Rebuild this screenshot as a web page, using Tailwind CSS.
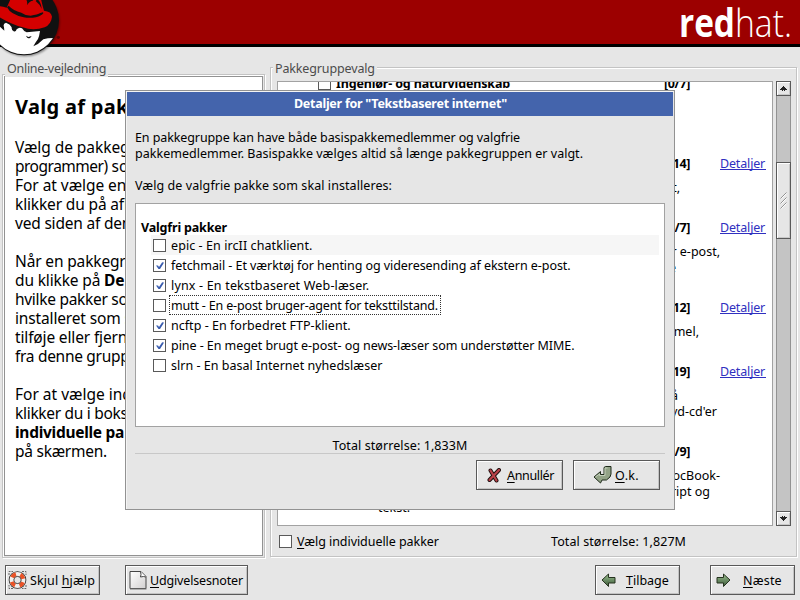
<!DOCTYPE html>
<html lang="da">
<head>
<meta charset="utf-8">
<title>Pakkegruppevalg</title>
<script src="https://cdn.jsdelivr.net/npm/@tailwindcss/browser@4"></script>
</head>
<body class="w-[800px] h-[600px] overflow-hidden bg-[#e6e6e6] text-black text-[12.5px] leading-4 font-['Noto_Sans','Open_Sans',sans-serif] whitespace-nowrap">
<div class="relative w-[800px] h-[600px] flex flex-col">

  <!-- Banner -->
  <header class="h-[47px] shrink-0 bg-[#9c0000] border-b-[3px] border-black flex justify-between">
    <svg class="relative z-10 shrink-0" width="64" height="60" viewBox="0 0 192 180">
      <defs>
        <clipPath id="disc"><circle cx="72" cy="61" r="102"/></clipPath>
        <filter id="soft"><feGaussianBlur stdDeviation="3"/></filter>
      </defs>
      <circle cx="75" cy="65" r="104" fill="#000" opacity=".45" filter="url(#soft)"/>
      <circle cx="72" cy="61" r="105" fill="#111"/>
      <g clip-path="url(#disc)">
        <path fill="#fff" d="M-40 75L0 80L13 92L12 82Q8 70 18 68Q30 72 35 82Q34 90 41 94Q47 97 50 88Q58 80 66 85Q72 95 80 97L120 93Q118 108 114 117Q106 128 100 139Q116 133 130 118Q142 114 160 114L160 180L-40 180Z"/>
        <path fill="#111" d="M78 107L85 111L95 108L91 113Q84 117 80 111Z"/>
        <path fill="#d40000" d="M-10 20Q2 16 20 23L34 -8L122 -8Q126 12 132 32Q154 34 156 50Q154 72 134 82Q100 94 68 82Q30 72 -10 46Z"/>
        <path fill="#111" d="M21 22L26 17Q40 32 64 38Q76 47 92 47Q113 44 121 39L129 37L130 40Q124 48 108 52Q88 55 71 52Q32 44 21 22Z"/>
        <path fill="#111" d="M78 -2Q83 4 81 16Q88 2 100 2L92 -4ZM112 -3Q124 8 125 27Q119 12 107 3Z"/>
      </g>
      <circle cx="175" cy="112" r="5" fill="#5c0000"/>
    </svg>
    <svg class="shrink-0 overflow-visible" width="128" height="44" viewBox="0 0 128 44" fill="#fff" font-family="Open Sans">
      <text x="7" y="37" font-size="39" font-weight="700" textLength="56" lengthAdjust="spacingAndGlyphs">red</text>
      <text x="63" y="37" font-size="39" font-weight="300" textLength="57" lengthAdjust="spacingAndGlyphs">hat.</text>
    </svg>
  </header>

  <main class="h-[511px] shrink-0 flex">
    <!-- Help pane -->
    <section class="w-[270px] pl-[2px] pt-[27px]">
      <div class="relative w-[263px] h-[484px] border border-[#c3c3c3] shadow-[inset_1px_1px_#fff,1px_1px_#fff] p-px">
        <h2 class="absolute left-[2px] -top-[14px] px-[2px] bg-[#e6e6e6] text-[#4c4c4c] tracking-[-0.27px]">Online-vejledning</h2>
        <div class="h-full bg-white border border-[#929292] pl-[10px] pt-[20px] text-[15.5px] leading-[19px] overflow-hidden">
          <h1 class="text-[20px] leading-[20px] font-bold tracking-[0.3px] mb-[21px]">Valg af pak</h1>
          <p class="mb-[19px] tracking-[-0.05px]">Vælg de pakkeg<br><span class="tracking-[-0.5px]">programmer)</span> so<br>For at vælge en<br><span class="tracking-[-0.15px]">klikker du på afk</span><br><span class="tracking-[-0.2px]">ved siden af den</span></p>
          <p class="mb-[19px] tracking-[-0.15px]">Når en pakkegr<br>du klikke på <b>De</b><br><span class="tracking-[-0.3px]">hvilke pakker so</span><br>installeret som s<br>tilføje eller fjern<br><span class="tracking-[-0.3px]">fra denne grupp</span></p>
          <p>For at vælge ind<br><span class="tracking-[-0.3px]">klikker du i boks</span><br><b class="tracking-[-0.29px]">individuelle pa</b><br><span class="tracking-[-0.25px]">på skærmen.</span></p>
        </div>
      </div>
    </section>

    <!-- Package groups -->
    <section class="pt-[20px]">
      <div class="relative w-[527px] h-[490px] border border-[#c3c3c3] shadow-[inset_1px_1px_#fff,1px_1px_#fff] pl-[6px] pt-[13px]">
        <h2 class="absolute left-[2px] -top-[7px] px-[2px] bg-[#e6e6e6] text-[#4c4c4c] tracking-[-0.14px]">Pakkegruppevalg</h2>
        <div class="flex gap-[3px]">
          <div class="w-[496px] h-[445px] bg-white border border-[#a2a2a2] overflow-hidden">
            <div class="-mt-[6px]">
              <div class="h-[80px] flex pl-[40px]">
                <span class="size-[13px] mt-px border border-[#595959]"></span>
                <b class="w-[275px] pl-[5px] tracking-[-0.16px]">Ingeniør- og naturvidenskab</b>
                <b class="w-[84px] text-right tracking-[-0.36px]">[0/7]</b>
              </div>
              <div class="h-[64px]">
                <div class="flex mb-2"><b class="w-[412px] text-right tracking-[-0.36px]">14]</b><a class="ml-[30px] w-[46px] h-[14px] border-b border-[#3030c0] text-[#3030c0] tracking-[-0.16px]">Detaljer</a></div>
                <p class="w-[402px] text-right">t,</p>
              </div>
              <div class="h-[80px]">
                <div class="flex mb-2"><b class="w-[412px] text-right tracking-[-0.36px]">/7]</b><a class="ml-[30px] w-[46px] h-[14px] border-b border-[#3030c0] text-[#3030c0] tracking-[-0.16px]">Detaljer</a></div>
                <p class="w-[442px] text-right">r e-post,</p>
                <p class="w-[398px] text-right">e</p>
              </div>
              <div class="h-[64px]">
                <div class="flex mb-2"><b class="w-[412px] text-right tracking-[-0.36px]">12]</b><a class="ml-[30px] w-[46px] h-[14px] border-b border-[#3030c0] text-[#3030c0] tracking-[-0.16px]">Detaljer</a></div>
                <p class="w-[421px] text-right">mel,</p>
              </div>
              <div class="h-[80px]">
                <div class="flex mb-2"><b class="w-[412px] text-right tracking-[-0.36px]">19]</b><a class="ml-[30px] w-[46px] h-[14px] border-b border-[#3030c0] text-[#3030c0] tracking-[-0.16px]">Detaljer</a></div>
                <p class="w-[400px] text-right">å</p>
                <p class="w-[439px] text-right">yd-cd'er</p>
              </div>
              <div class="h-[80px]">
                <div class="mb-2"><b class="block w-[412px] text-right tracking-[-0.36px]">/9]</b></div>
                <p class="w-[442px] text-right">ocBook-</p>
                <p class="w-[432px] text-right">ript og</p>
                <p class="pl-[100px]">tekst.</p>
              </div>
            </div>
          </div>
          <!-- Scrollbar -->
          <div class="relative w-[15px] h-[445px] bg-[#c4c4c4] border border-[#929292] flex flex-col">
            <span class="-mx-px -mt-px w-[15px] h-[15px] bg-[#e6e6e6] border border-[#595959] shadow-[inset_1px_1px_#fff,inset_-1px_-1px_#c8c8c8] flex items-center justify-center">
              <svg width="7" height="5" shape-rendering="crispEdges"><path d="M3 0h1v1h1v1h1v1h1v1h-2v1h-1v-1h-1v1h-1v-1h-2v-1h1v-1h1v-1h1z" fill="#222"/></svg>
            </span>
            <span class="-mx-px mt-[66px] w-[15px] h-[77px] bg-[#e6e6e6] border border-[#595959] shadow-[inset_1px_1px_#fff,inset_-1px_-1px_#c8c8c8] flex items-center justify-center">
              <svg width="7" height="17" fill="none"><path d="M.5 6.500l6-6M.5 11.500l6-6M.5 16.500l6-6" stroke="#929292"/><path d="M1.500 6.500l5-5M1.500 11.500l5-5M1.500 16.500l5-5" stroke="#fff"/></svg>
            </span>
            <span class="-mx-px -mb-px mt-auto w-[15px] h-[15px] bg-[#e6e6e6] border border-[#595959] shadow-[inset_1px_1px_#fff,inset_-1px_-1px_#c8c8c8] flex items-center justify-center">
              <svg width="7" height="5" shape-rendering="crispEdges"><path d="M0 1h2v-1h1v1h1v-1h1v1h2v1h-1v1h-1v1h-1v1h-1v-1h-1v-1h-1v-1h-1z" fill="#222"/></svg>
            </span>
          </div>
        </div>
        <div class="flex mt-[8px] pl-[2px]">
          <span class="size-[13px] mt-px bg-white border border-[#595959]"></span>
          <span class="ml-[5px] w-[254px] tracking-[-0.05px]"><u class="underline-offset-2">V</u>ælg individuelle pakker</span>
          <span class="tracking-[0.09px]">Total størrelse: 1,827M</span>
        </div>
      </div>
    </section>
  </main>

  <!-- Navigation buttons -->
  <footer class="flex pl-[5px] pt-[7px]">
    <button class="w-[95px] h-[30px] border border-[#595959] shadow-[inset_1px_1px_#fff,inset_-1px_-1px_#c3c3c3] flex items-center pl-[2px] tracking-[0.12px]">
      <svg class="mr-[3px]" width="19" height="20" viewBox="0 0 19 20" fill="none"><path d="M1 5V1.500H5M14 1.500h4V5M18 15v3.500h-4M5 18.500H1V15" stroke="#666" stroke-dasharray="2 1"/><circle cx="9.500" cy="10" r="8.800" fill="#2b2b2b"/><circle cx="9.500" cy="10" r="5.900" stroke="#f2efec" stroke-width="4.200"/><circle cx="9.500" cy="10" r="5.900" stroke="#ea5226" stroke-width="4.200" stroke-dasharray="4.800 4.467" transform="rotate(22 9.500 10)"/><circle cx="9.500" cy="10" r="3.600" fill="#e6e6e6" stroke="#444" stroke-width=".8"/></svg>
      <span class="pt-[2px]">Skjul <u class="underline-offset-2">h</u>jælp</span>
    </button>
    <button class="ml-[25px] w-[123px] h-[30px] border border-[#595959] shadow-[inset_1px_1px_#fff,inset_-1px_-1px_#c3c3c3] flex items-center pl-[3px] tracking-[-0.16px]">
      <svg class="mr-[3px]" width="18" height="20" viewBox="0 0 18 20"><defs><linearGradient id="page" x1="0" y1="0" x2="1" y2="1"><stop stop-color="#fff"/><stop offset="1" stop-color="#d2d0d0"/></linearGradient></defs><path d="M1 1.500h11l5 5v12h-16z" fill="url(#page)" stroke="#444"/><path d="M11.500 1.500q1 3 0 5.500q3-1 5.500 0" fill="#fff" stroke="#444"/><path d="M1 19h16.500" stroke="#777"/></svg>
      <span class="pt-[2px]"><u class="underline-offset-2">U</u>dgivelsesnoter</span>
    </button>
    <button class="ml-[347px] w-[85px] h-[30px] border border-[#595959] shadow-[inset_1px_1px_#fff,inset_-1px_-1px_#c3c3c3] flex items-center pl-[5px]">
      <svg class="mr-[10px]" width="15" height="15" viewBox="0 0 15 15"><defs><linearGradient id="green" x1="0" y1="0" x2="0" y2="1"><stop stop-color="#9ac090"/><stop offset="1" stop-color="#3b5838"/></linearGradient></defs><path d="M1 7L7.500 1v3.500H14v5.500H7.500v3.500z" fill="url(#green)" stroke="#26331f"/></svg>
      <span class="pt-[2px]"><u class="underline-offset-2">T</u>ilbage</span>
    </button>
    <button class="ml-[30px] w-[85px] h-[30px] border border-[#595959] shadow-[inset_1px_1px_#fff,inset_-1px_-1px_#c3c3c3] flex items-center pl-[5px] tracking-[0.2px]">
      <svg class="mr-[12px]" width="15" height="15" viewBox="0 0 15 15"><path d="M14 7L7.500 1v3.500H1v5.500h6.500v3.500z" fill="url(#green)" stroke="#26331f"/></svg>
      <span class="pt-[2px]"><u class="underline-offset-2">N</u>æste</span>
    </button>
  </footer>

  <!-- Details dialog -->
  <div class="absolute z-20 left-[125px] top-[90px] w-[550px] h-[420px] bg-[#e6e6e6] border border-[#929292] shadow-[inset_1px_1px_#f4f4f4] pt-px px-px flex flex-col">
    <h2 class="h-[24px] bg-[#4464ac] text-white font-bold text-center pt-[4px] pl-px tracking-[-0.26px]">Detaljer for "Tekstbaseret internet"</h2>
    <div class="px-[8px] pt-[14px]">
      <p><span class="tracking-[-0.1px]">En pakkegruppe kan have både basispakkemedlemmer og valgfrie</span><br><span class="tracking-[0.02px]">pakkemedlemmer. Basispakke vælges altid så længe pakkegruppen er valgt.</span></p>
      <p class="mt-4 tracking-[0.075px]">Vælg de valgfrie pakke som skal installeres:</p>
      <div class="mt-[9px] w-[530px] h-[224px] bg-white border border-[#a2a2a2] px-[5px] pt-[16px]">
        <h3 class="h-[15px] font-bold tracking-[-0.17px]">Valgfri pakker</h3>
        <ul class="pl-[10px]">
          <li class="h-5 flex items-center pl-[2px] bg-[#f6f6f6]"><span class="size-[13px] bg-white border border-[#595959]"></span><span class="ml-[5px] pt-[2px] tracking-[0.08px]">epic - En ircII chatklient.</span></li>
          <li class="h-5 flex items-center pl-[2px]"><span class="size-[13px] border border-[#595959]"><svg width="11" height="11"><path d="M2 5.500h2l1 1.500l3-4.500l1.500-.5v1.500L6 9H4.500z" fill="#3a5cae"/></svg></span><span class="ml-[5px] pt-[2px] tracking-[-0.063px]">fetchmail - Et værktøj for henting og videresending af ekstern e-post.</span></li>
          <li class="h-5 flex items-center pl-[2px]"><span class="size-[13px] border border-[#595959]"><svg width="11" height="11"><path d="M2 5.500h2l1 1.500l3-4.500l1.500-.5v1.500L6 9H4.500z" fill="#3a5cae"/></svg></span><span class="ml-[5px] pt-[2px] tracking-[0.18px]">lynx - En tekstbaseret Web-læser.</span></li>
          <li class="h-5 flex items-center pl-[2px]"><span class="size-[13px] border border-[#595959]"></span><span class="ml-[3px] w-[272px] h-5 border border-dotted border-[#333] pl-px pt-[2px] tracking-[-0.165px]">mutt - En e-post bruger-agent for teksttilstand.</span></li>
          <li class="h-5 flex items-center pl-[2px]"><span class="size-[13px] border border-[#595959]"><svg width="11" height="11"><path d="M2 5.500h2l1 1.500l3-4.500l1.500-.5v1.500L6 9H4.500z" fill="#3a5cae"/></svg></span><span class="ml-[5px] pt-[2px] tracking-[0.03px]">ncftp - En forbedret FTP-klient.</span></li>
          <li class="h-5 flex items-center pl-[2px]"><span class="size-[13px] border border-[#595959]"><svg width="11" height="11"><path d="M2 5.500h2l1 1.500l3-4.500l1.500-.5v1.500L6 9H4.500z" fill="#3a5cae"/></svg></span><span class="ml-[5px] pt-[2px] tracking-[-0.06px]">pine - En meget brugt e-post- og news-læser som understøtter MIME.</span></li>
          <li class="h-5 flex items-center pl-[2px]"><span class="size-[13px] border border-[#595959]"></span><span class="ml-[5px] pt-[2px] tracking-[0.02px]">slrn - En basal Internet nyhedslæser</span></li>
        </ul>
      </div>
      <p class="mt-[11px] h-[16px] text-center tracking-[0.09px] border-b border-[#c8c8c8]">Total størrelse: 1,833M</p>
      <div class="flex justify-end gap-[10px] mt-[6px] pr-[5px]">
        <button class="w-[87px] h-[30px] border border-[#595959] shadow-[inset_1px_1px_#fff,inset_-1px_-1px_#c3c3c3] flex items-center pl-[10px] tracking-[-0.35px]">
          <svg class="mr-[6px]" width="14" height="15" viewBox="0 0 14 15" fill="none" stroke-linecap="round"><path d="M3.500 2.500L9.500 12.500M12 2L2.500 12" stroke="#1c0c0c" stroke-width="4"/><path d="M3.500 2.500L9.500 12.500M12 2L2.500 12" stroke="#b84048" stroke-width="2.200"/></svg>
          <span class="pt-[2px]"><u class="underline-offset-2">A</u>nnullér</span>
        </button>
        <button class="w-[87px] h-[30px] border border-[#595959] shadow-[inset_1px_1px_#fff,inset_-1px_-1px_#c3c3c3] flex items-center pl-[19px] tracking-[0.35px]">
          <svg class="mr-[3px]" width="19" height="18" viewBox="0 0 19 18"><path d="M1 11L7.500 5.500V8.500H11V1.500L12.500.5H18V8L17 11L13.500 14H9L7.500 17Z" fill="#92a386" stroke="#1e2a1a"/><path d="M2.500 11L6.500 8v1.500H12V2h2.500" fill="none" stroke="#c3cfba"/></svg>
          <span class="pt-[2px]"><u class="underline-offset-2">O</u>.k.</span>
        </button>
      </div>
    </div>
  </div>
</div>
</body>
</html>
